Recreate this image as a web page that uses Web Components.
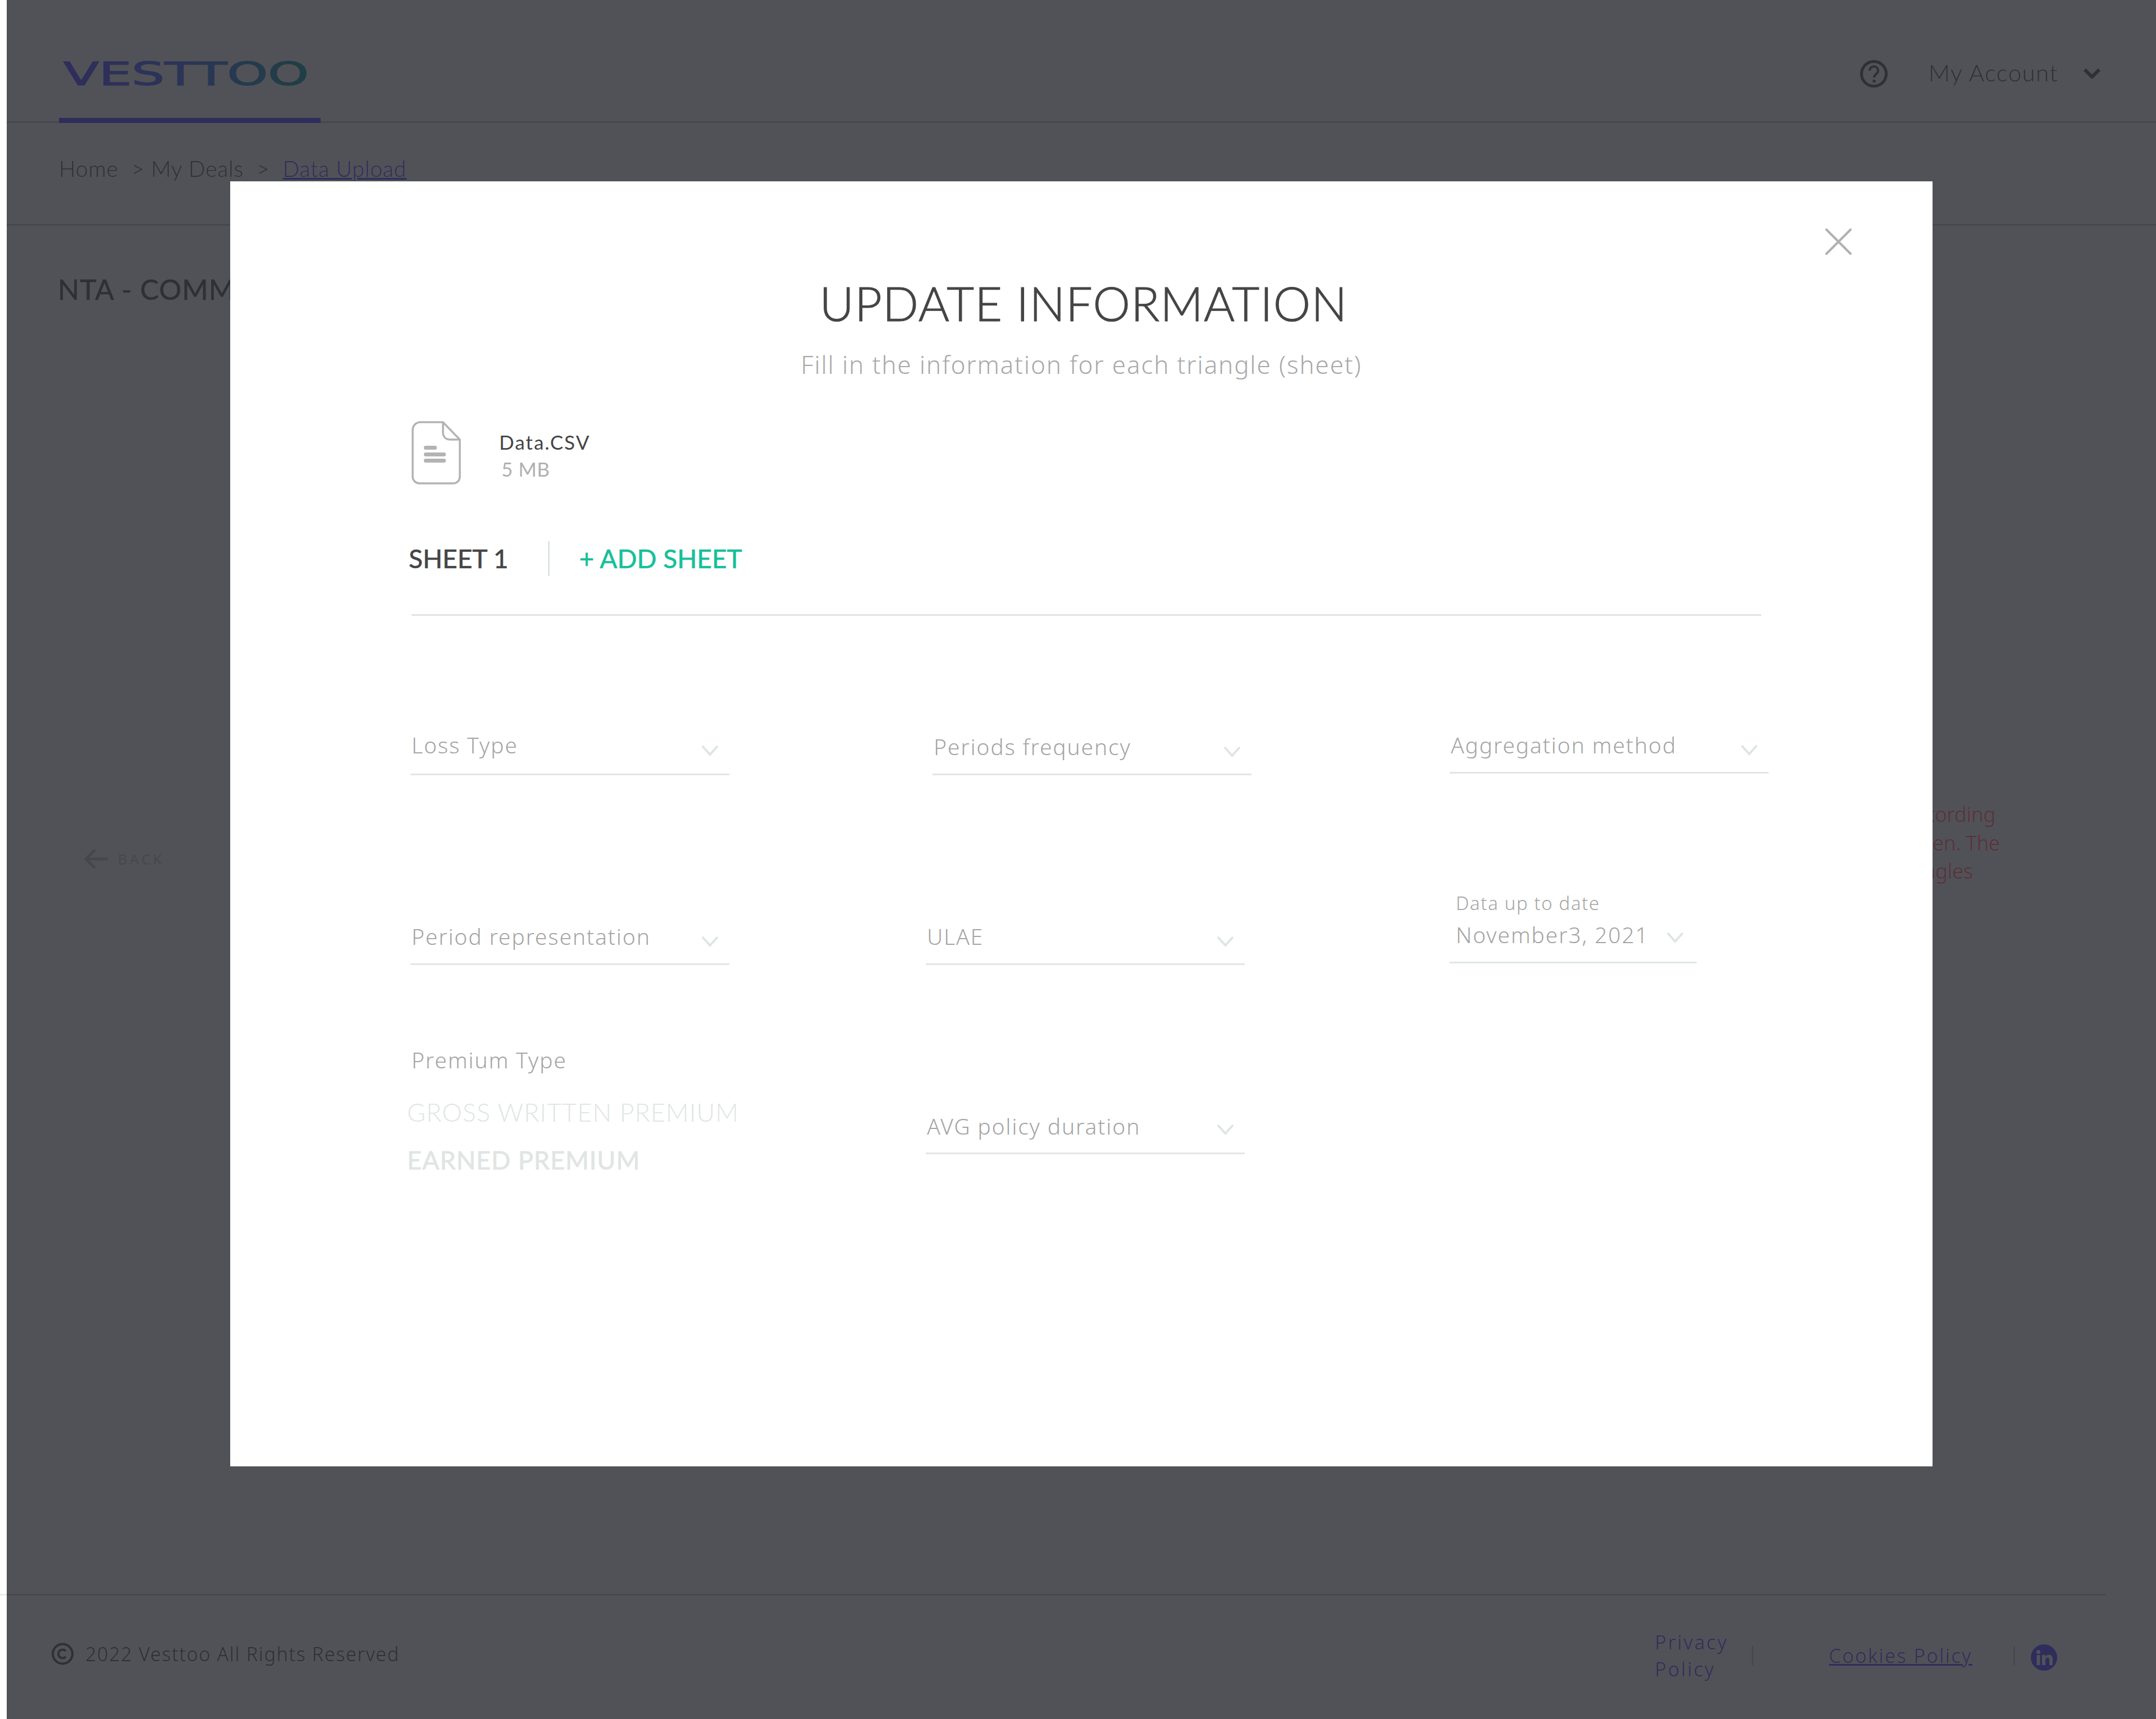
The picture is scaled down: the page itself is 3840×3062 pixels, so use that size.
<!DOCTYPE html>
<html lang="en"><head><meta charset="utf-8"><title>Vesttoo</title>
<style>
html,body{margin:0;padding:0;background:#fff}
body{width:3840px;height:3062px;overflow:hidden;position:relative;font-family:"Lato","Noto Sans",sans-serif}
</style></head>
<body>
<vt-page>
  <vt-header></vt-header>
  <vt-breadcrumb></vt-breadcrumb>
  <vt-main></vt-main>
  <vt-footer></vt-footer>
</vt-page>
<vt-modal>
  <vt-file name="Data.CSV" size="5 MB"></vt-file>
  <vt-sheets></vt-sheets>
  <vt-form></vt-form>
</vt-modal>
<script>
const def=(name,html)=>customElements.define(name,class extends HTMLElement{
  constructor(){super();this.attachShadow({mode:'open'}).innerHTML=typeof html==='function'?html(this):html;}
  connectedCallback(){ if(typeof html==='function') this.shadowRoot.innerHTML=html(this); }
});
const chev=`<svg width="31" height="20" viewBox="0 0 31 20" fill="none" stroke="#dfe5e4" stroke-width="4"><path d="M2 2 15.500 17 29 2"/></svg>`;

def('vt-page',`<style>:host{display:flex;flex-direction:column;box-sizing:border-box;width:3828px;height:3062px;margin-left:12px;background:#515257;color:#2f3037}</style><slot></slot>`);

def('vt-header',`<style>
:host{display:flex;align-items:flex-start;box-sizing:border-box;height:219px;border-bottom:3px solid #47484d;position:relative;padding-left:93px}
.tab{width:466px;height:219px;box-sizing:border-box;border-bottom:9px solid #2f2d5c;margin-bottom:-3px;padding-left:5px;padding-top:98px}
svg.logo{display:block;overflow:visible}
.right{margin-left:auto;display:flex;align-items:center;padding-right:99px;box-sizing:border-box;height:262px}
.acc{font:300 42px "Lato",sans-serif;letter-spacing:1.4px;margin-left:73px;margin-right:45px;padding-bottom:4px}
</style>
<div class="tab"><svg class="logo" width="435" height="56"><defs><linearGradient id="g" x1="0" x2="1" y1="0" y2="0"><stop offset="0" stop-color="#2f2d5c"/><stop offset=".5" stop-color="#2b3557"/><stop offset="1" stop-color="#1f3f44"/></linearGradient></defs><text x="3" y="54" font-family="DejaVu Sans" font-weight="400" font-size="57" textLength="437" lengthAdjust="spacingAndGlyphs" fill="url(#g)" stroke="url(#g)" stroke-width="1.500">VESTTOO</text></svg></div>
<div class="right">
<svg width="49" height="49" viewBox="0 0 49 49" fill="none" stroke="#2f3037"><circle cx="24.500" cy="24.500" r="22" stroke-width="5"/><path d="M17 19c0-10 15-10 15 0 0 6-7 6-7 12" stroke-width="4"/><path d="M25 35v5" stroke-width="5"/></svg>
<span class="acc">My Account</span>
<svg width="30" height="18" viewBox="0 0 30 18" fill="none" stroke="#2f3037" stroke-width="6"><path d="M2 2 15 15 28 2"/></svg>
</div>`);

def('vt-breadcrumb',`<style>
:host{display:flex;align-items:flex-start;box-sizing:border-box;height:183px;border-bottom:3px solid #47484d;padding:51px 0 0 93px;font:300 39px/60px "Lato",sans-serif;letter-spacing:.9px;white-space:pre;color:#2f3037}
a{color:#2f2d5c;text-decoration:underline}
</style><span>Home  &gt; My Deals  &gt;  </span><a>Data Upload</a>`);

def('vt-main',`<style>
:host{display:block;flex:1;position:relative;box-sizing:border-box;padding:83px 0 0 91px}
h1{margin:0;font:400 50px/60px "Lato",sans-serif;letter-spacing:1px;color:#2f3037;white-space:nowrap;-webkit-text-stroke:.5px #2f3037}
.mid{display:flex;justify-content:space-between;align-items:flex-start;margin-top:881px;padding-left:47px}
.back{display:flex;align-items:center;gap:18px;color:#46474d;font:400 25px/30px "Noto Sans",sans-serif;letter-spacing:5px;margin-top:87px}
.err{text-align:right;color:#5a3038;font:300 36px/50.500px "Noto Sans",sans-serif;width:700px;margin-right:278px}
.err span{display:block;white-space:nowrap}
</style>
<h1>NTA - COMMUTATION</h1>
<div class="mid">
 <div class="back"><svg width="42" height="34" viewBox="0 0 42 34" fill="none" stroke="#46474d" stroke-width="5" stroke-linecap="round" stroke-linejoin="round"><path d="M40 17H3M18 2 3 17 18 32"/></svg>BACK</div>
 <div class="err"><span style="padding-right:8px">according</span><span>the screen. The</span><span style="padding-right:48px">triangles</span></div>
</div>`);

def('vt-footer',`<style>
:host{display:flex;align-items:center;box-sizing:border-box;height:223px;position:relative;padding-left:80px;color:#2f3037;font:300 34px/48px "Noto Sans",sans-serif;letter-spacing:1.7px}
.rule{position:absolute;left:-12px;top:0;width:3750px;height:3px;background:linear-gradient(to right,#e8eceb 12px,#47484d 12px)}
.c{margin-right:21px;display:block}
.copy{display:flex;align-items:center;margin-top:-9px}
.links{margin-left:auto;display:flex;align-items:center;padding-right:176px;color:#2f2d5c;letter-spacing:3.3px;margin-top:-3px}
.p{width:172px}
.d{width:3px;height:35px;background:#47484d}
.in{margin-top:6px}
a{color:#2f2d5c;text-decoration:underline}
</style>
<div class="rule"></div>
<div class="copy"><svg class="c" width="39" height="40" viewBox="0 0 39 40" fill="none" stroke="#2f3037"><circle cx="19.500" cy="20" r="17.500" stroke-width="4"/><path d="M25 15a7.500 7.500 0 1 0 0 10" stroke-width="4"/></svg>
<span>2022 Vesttoo All Rights Reserved</span></div>
<div class="links">
<div class="p">Privacy Policy</div><div class="d"></div>
<a style="margin:0 73px 0 135px;letter-spacing:2.7px">Cookies Policy</a><div class="d" style="margin-right:28px"></div>
<svg class="in" width="47" height="47" viewBox="0 0 47 47"><circle cx="23.500" cy="23.500" r="23.500" fill="#2f2d5c"/><g fill="#515257"><circle cx="13.500" cy="13.500" r="3.500"/><rect x="10.500" y="19" width="6" height="18"/><path d="M20 19h6v3c1.500-2.500 4-3.500 6.500-3.500 4.500 0 6.500 3 6.500 7.500v11h-6V27.500c0-2.500-1-3.800-3-3.800s-4 1.300-4 4V37h-6z"/></g></svg>
</div>`);

def('vt-modal',`<style>
:host{position:absolute;left:410px;top:323px;width:3032px;height:2289px;box-sizing:border-box;background:#fff;padding:0 0 0 321px;display:block}
h2{margin:0 0 0 -321px;padding:167px 0 0 8px;text-align:center;font:300 84px/100px "Lato",sans-serif;color:#454545;letter-spacing:1.3px;-webkit-text-stroke:1.2px #454545}
p{margin:0 0 0 -321px;padding:29px 0 0;text-align:center;font:300 44px/60px "Noto Sans",sans-serif;color:#a9a9a9;letter-spacing:1.85px}
.x{position:absolute;right:144px;top:84px;display:block}
</style>
<svg class="x" width="47" height="47" viewBox="0 0 47 47" fill="none" stroke="#b0b0b0" stroke-width="4" stroke-linecap="round"><path d="M2 2 45 45M45 2 2 45"/></svg>
<h2>UPDATE INFORMATION</h2>
<p>Fill in the information for each triangle (sheet)</p>
<slot></slot>`);

def('vt-file',h=>`<style>
:host{display:flex;align-items:flex-start;margin:71px 0 0 2px;height:113px}
.t{margin-left:68px;padding-top:13px;display:flex;flex-direction:column}
.n{font:400 35px/48px "Lato",sans-serif;color:#454545;letter-spacing:2px}
.s{font:400 35px/48px "Lato",sans-serif;color:#b0b0b0;margin-left:4px;letter-spacing:.5px}
</style>
<svg width="88" height="113" viewBox="0 0 88 113" fill="none"><path d="M56 2H16C8 2 2 8 2 16v83c0 7 6 12 12 12h60c7 0 12-5 12-12V33L56 2v18c0 8 5 13 13 13h17" stroke="#b3b3b3" stroke-width="3.500" stroke-linejoin="round"/><g fill="#b3b3b3"><rect x="22" y="44" width="23" height="7" rx="3"/><rect x="22" y="56" width="39" height="7" rx="3"/><rect x="22" y="67" width="39" height="7" rx="3"/></g></svg>
<div class="t"><span class="n">${h.getAttribute('name')}</span><span class="s">${h.getAttribute('size')}</span></div>`);

def('vt-sheets',`<style>
:host{display:flex;align-items:center;box-sizing:border-box;margin:0 0 0 -3px}
.wrap{display:flex;align-items:center;width:2409px;height:234px;box-sizing:border-box;position:relative;padding-top:30px}
.a{font:400 46px/62px "Lato",sans-serif;color:#454545;-webkit-text-stroke:.6px #454545}
.div{width:3px;height:62px;background:#dfe5e4;margin:0 52px 0 71px}
.b{font:400 46px/62px "Lato",sans-serif;color:#16c098;-webkit-text-stroke:.6px #16c098}
.line{position:absolute;left:5px;right:0;bottom:0;height:3px;background:#dfe5e4}
</style><div class="wrap"><span class="a">SHEET 1</span><span class="div"></span><span class="b">+ ADD SHEET</span><div class="line"></div></div>`);

def('vt-select',h=>{const w=h.getAttribute('w')||568,pb=h.getAttribute('pb')||24,r=h.getAttribute('r')||19,pl=h.getAttribute('pl')||2,cu=h.getAttribute('cu')||5,lab=h.getAttribute('label');
return `<style>
:host{display:block;width:${w}px;color:#a4a4a4;font:300 39px/48px "Noto Sans",sans-serif;letter-spacing:1.85px}
.l{font-size:33px;line-height:44px;padding-left:${pl}px;letter-spacing:1.6px;margin-bottom:10px}
.f{display:flex;justify-content:space-between;align-items:flex-end;box-sizing:border-box;border-bottom:3px solid #e1e6e5;padding:0 ${r}px ${pb}px ${pl}px;white-space:nowrap}
svg{display:block;margin-bottom:${cu}px}
</style>${lab?`<div class="l">${lab}</div>`:''}<div class="f"><span><slot></slot></span>${chev}</div>`});

def('vt-form',`<style>
:host{display:block}
.row{display:flex;align-items:flex-end}
.r1{height:284px}.r2{height:338px}
.pt{width:568px}
.pt .h{font:300 39px/48px "Noto Sans",sans-serif;letter-spacing:1.85px;color:#a4a4a4;padding-left:2px}
.pt .o{font:300 45px/60px "Lato",sans-serif;letter-spacing:1px;color:#e0e5e4;margin:39px 0 0 -6px;white-space:nowrap}
.pt .o.e{font-weight:400;margin-top:25px;letter-spacing:1px;-webkit-text-stroke:.8px #e0e5e4}
</style>
<div class="row r1">
 <vt-select pb="27" cu="4">Loss Type</vt-select>
 <vt-select style="margin-left:362px">Periods frequency</vt-select>
 <vt-select style="margin-left:353px;margin-bottom:3px">Aggregation method</vt-select>
</div>
<div class="row r2">
 <vt-select>Period representation</vt-select>
 <vt-select style="margin-left:350px">ULAE</vt-select>
 <vt-select style="margin-left:365px;margin-bottom:3px" w="440" r="23" pl="11" cu="9" label="Data up to date">November3, 2021</vt-select>
</div>
<div class="row" style="align-items:flex-start;margin-top:145px">
 <div class="pt"><div class="h">Premium Type</div><div class="o">GROSS WRITTEN PREMIUM</div><div class="o e">EARNED PREMIUM</div></div>
 <vt-select style="margin-left:350px;margin-top:118px" pb="23" cu="8">AVG policy duration</vt-select>
</div>`);
</script>
</body></html>
